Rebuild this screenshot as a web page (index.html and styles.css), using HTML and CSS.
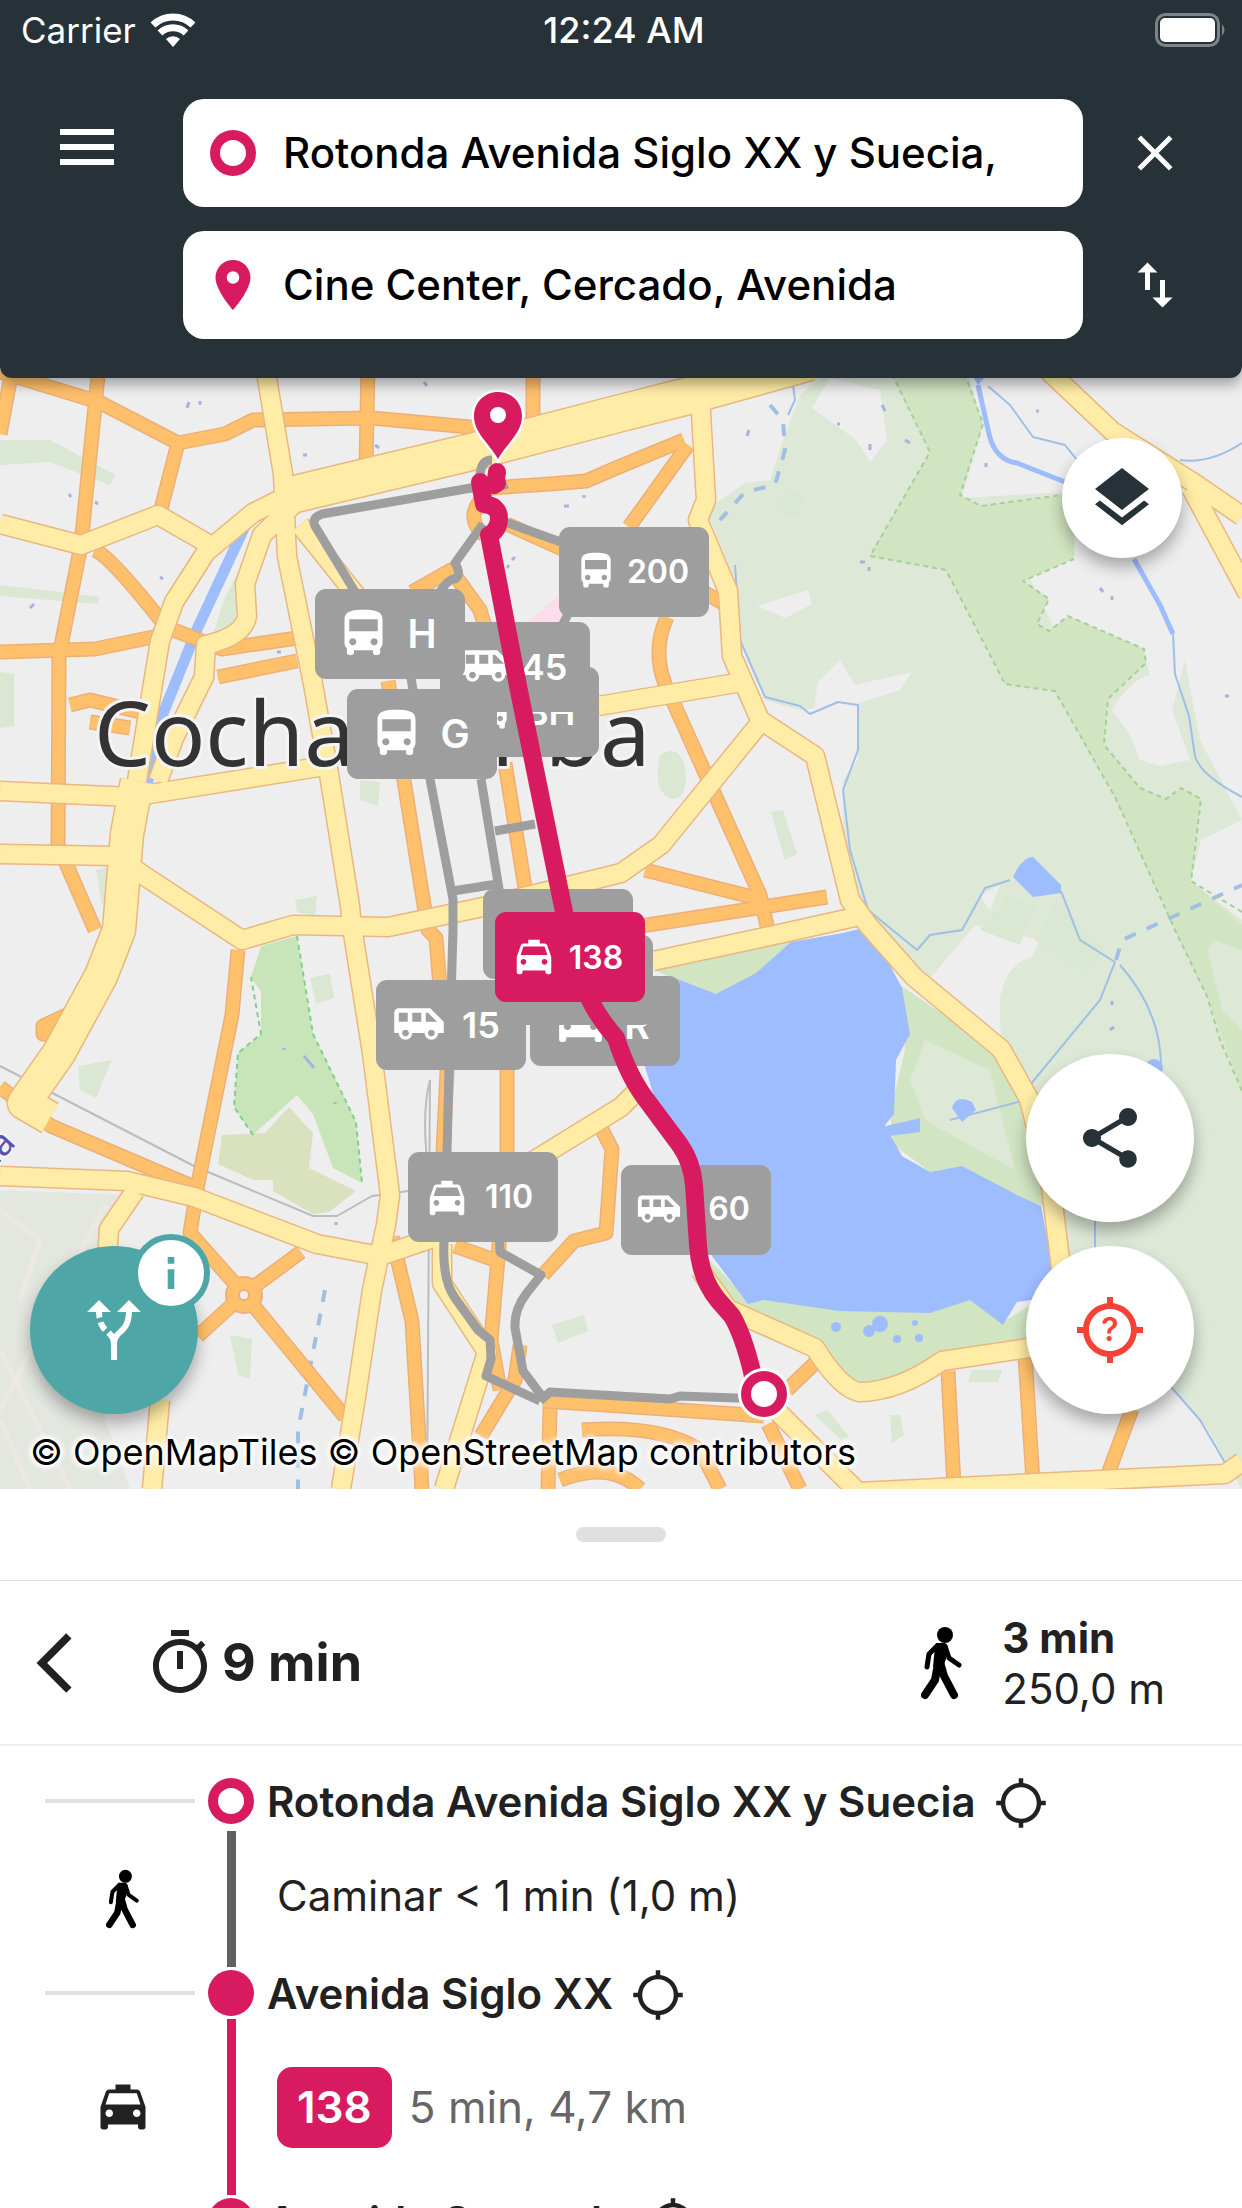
FILE: index.html
```html
<!DOCTYPE html>
<html lang="es">
<head>
    <meta charset="UTF-8">
    <meta name="viewport" content="width=device-width, initial-scale=1.0">
    <title>Rutas</title>
    <link rel="stylesheet" href="styles.css">
</head>
<body>
    <!-- ICONS -->
    <svg class="sprite" aria-hidden="true">
        <symbol id="i-menu" viewBox="0 0 24 24"><path d="M3 18h18v-2H3v2zm0-5h18v-2H3v2zm0-7v2h18V6H3z"/></symbol>
        <symbol id="i-close" viewBox="0 0 24 24"><path d="M19 6.41L17.59 5 12 10.59 6.41 5 5 6.41 10.59 12 5 17.59 6.41 19 12 13.41 17.59 19 19 17.59 13.41 12z"/></symbol>
        <symbol id="i-swap" viewBox="0 0 24 24"><path d="M16 17.01V10h-2v7.01h-3L15 21l4-3.99h-3zM9 3L5 6.99h3V14h2V6.99h3L9 3z"/></symbol>
        <symbol id="i-pin" viewBox="0 0 24 24"><path d="M12 2C8.13 2 5 5.13 5 9c0 5.25 7 13 7 13s7-7.75 7-13c0-3.87-3.13-7-7-7zm0 9.5a2.5 2.5 0 010-5 2.5 2.5 0 010 5z"/></symbol>
        <symbol id="i-layers" viewBox="0 0 24 24"><path d="M12 16l7.36-5.73L21 9l-9-7-9 7 1.63 1.27M12 18.54l-7.38-5.73L3 14.07l9 7 9-7-1.63-1.27L12 18.54z"/></symbol>
        <symbol id="i-share" viewBox="0 0 24 24"><path d="M18 16.08c-.76 0-1.44.3-1.96.77L8.91 12.7c.05-.23.09-.46.09-.7s-.04-.47-.09-.7l7.05-4.11c.54.5 1.25.81 2.04.81 1.66 0 3-1.34 3-3s-1.34-3-3-3-3 1.34-3 3c0 .24.04.47.09.7L8.04 9.81C7.5 9.31 6.79 9 6 9c-1.66 0-3 1.34-3 3s1.34 3 3 3c.79 0 1.5-.31 2.04-.81l7.12 4.16c-.05.21-.08.43-.08.65 0 1.61 1.31 2.92 2.92 2.92s2.92-1.31 2.92-2.92-1.31-2.92-2.92-2.92z"/></symbol>
        <symbol id="i-target" viewBox="0 0 24 24"><path d="M20.94 11c-.46-4.17-3.77-7.48-7.94-7.94V1h-2v2.06C6.83 3.52 3.52 6.83 3.06 11H1v2h2.06c.46 4.17 3.77 7.48 7.94 7.94V23h2v-2.06c4.17-.46 7.48-3.77 7.94-7.94H23v-2h-2.06zM12 19c-3.87 0-7-3.13-7-7s3.13-7 7-7 7 3.13 7 7-3.13 7-7 7z"/></symbol>
        <symbol id="i-route" viewBox="0 0 24 24"><path d="M9.78 11.16l-1.42 1.42c-.68-.69-1.34-1.58-1.79-2.94l1.94-.49c.32.89.77 1.5 1.27 2.01zM11 6L7 2 3 6h3.02c.02.81.08 1.54.19 2.17l1.94-.49C8.08 7.2 8.03 6.63 8.02 6H11zm10 0l-4-4-4 4h2.99c-.1 3.68-1.28 4.75-2.54 5.88-.5.44-1.01.92-1.45 1.55-.34-.49-.73-.88-1.13-1.24L9.46 13.6c.93.85 1.54 1.54 1.54 3.4v5h2v-5c0-2.02.71-2.66 1.79-3.63 1.38-1.24 3.08-2.78 3.2-7.37H21z"/></symbol>
        <symbol id="i-back" viewBox="0 0 24 24"><path d="M17.51 3.87L15.73 2.1 5.84 12l9.9 9.9 1.77-1.77L9.38 12l8.13-8.13z"/></symbol>
        <symbol id="i-timer" viewBox="0 0 24 24"><path d="M15 1H9v2h6V1zm-4 13h2V8h-2v6zm8.03-6.61l1.42-1.42c-.43-.51-.9-.99-1.41-1.41l-1.42 1.42A8.962 8.962 0 0012 4c-4.97 0-9 4.03-9 9s4.02 9 9 9a8.994 8.994 0 007.03-14.61zM12 20c-3.87 0-7-3.13-7-7s3.13-7 7-7 7 3.13 7 7-3.13 7-7 7z"/></symbol>
        <symbol id="i-bus" viewBox="0 0 24 24"><path d="M4 16c0 .88.39 1.67 1 2.22V20c0 .55.45 1 1 1h1c.55 0 1-.45 1-1v-1h8v1c0 .55.45 1 1 1h1c.55 0 1-.45 1-1v-1.78c.61-.55 1-1.34 1-2.22V6c0-3.5-3.58-4-8-4s-8 .5-8 4v10zm3.5 1c-.83 0-1.5-.67-1.5-1.5S6.67 14 7.5 14s1.5.67 1.5 1.5S8.33 17 7.5 17zm9 0c-.83 0-1.5-.67-1.5-1.5s.67-1.5 1.5-1.5 1.5.67 1.5 1.5-.67 1.5-1.5 1.5zm1.5-6H6V6h12v5z"/></symbol>
        <symbol id="i-taxi" viewBox="0 0 24 24"><path d="M18.92 6.01C18.72 5.42 18.16 5 17.5 5H15V3H9v2H6.5c-.66 0-1.21.42-1.42 1.01L3 12v8c0 .55.45 1 1 1h1c.55 0 1-.45 1-1v-1h12v1c0 .55.45 1 1 1h1c.55 0 1-.45 1-1v-8l-2.08-5.99zM6.5 16c-.83 0-1.5-.67-1.5-1.5S5.67 13 6.5 13s1.5.67 1.5 1.5S7.33 16 6.5 16zm11 0c-.83 0-1.5-.67-1.5-1.5s.67-1.5 1.5-1.5 1.5.67 1.5 1.5-.67 1.5-1.5 1.5zM5 11l1.5-4.5h11L19 11H5z"/></symbol>
        <symbol id="i-van" viewBox="0 0 24 24"><path d="M17 5H3c-1.1 0-2 .89-2 2v9h2c0 1.65 1.34 3 3 3s3-1.35 3-3h5.5c0 1.65 1.34 3 3 3s3-1.35 3-3H23v-5l-6-6zM3 11V7h4v4H3zm3 6.5c-.83 0-1.5-.67-1.5-1.5s.67-1.5 1.5-1.5 1.5.67 1.5 1.5-.67 1.5-1.5 1.5zm7-6.5H9V7h4v4zm4.5 6.5c-.83 0-1.5-.67-1.5-1.5s.67-1.5 1.5-1.5 1.5.67 1.5 1.5-.67 1.5-1.5 1.5zM15 11V7h1l4 4h-5z"/></symbol>
        <symbol id="i-walk" viewBox="0 0 42 74">
            <circle cx="24" cy="9" r="8"/>
            <path d="M15 17h9l3 4-2 12-3 8h-10l2-20z"/>
            <g fill="none" stroke="currentColor" stroke-linecap="round" stroke-linejoin="round">
                <path stroke-width="5" d="M16 20l-8 8-2 13M24 20l4 12 10 7"/>
                <path stroke-width="8" d="M17 38l-3 16-10 15M19 36l4 14 10 19"/>
            </g>
        </symbol>
    </svg>

    <div class="app">
        <!-- START HEADER -->
        <header class="header">
            <div class="statusbar">
                <div class="carrier">
                    <span>Carrier</span>
                    <svg class="wifi" viewBox="0 0 46 34">
                        <path d="M23 34l-7-8a10 10 0 0114 0z" fill="#fff"/>
                        <path d="M10 20a19 19 0 0126 0M3 12a29 29 0 0140 0" fill="none" stroke="#fff" stroke-width="7"/>
                    </svg>
                </div>
                <span class="clock">12:24 AM</span>
                <svg class="battery" viewBox="0 0 72 34">
                    <rect x="1.5" y="1.5" width="62" height="31" rx="9" fill="none" stroke="#7d8488" stroke-width="3"/>
                    <rect x="5" y="5" width="55" height="24" rx="5" fill="#fff"/>
                    <path d="M67 11q5 6 0 12z" fill="#7d8488"/>
                </svg>
            </div>
            <form class="search">
                <button type="button" class="icon-btn menu-btn" aria-label="Menú"><svg class="icon-lg"><use href="#i-menu"/></svg></button>
                <label class="field">
                    <span class="field-icon"><span class="ring"></span></span>
                    <input type="text" aria-label="Origen" value="Rotonda Avenida Siglo XX y Suecia,">
                </label>
                <button type="button" class="icon-btn side-btn" aria-label="Cerrar"><svg class="icon-md"><use href="#i-close"/></svg></button>
                <label class="field field-to">
                    <span class="field-icon"><svg class="icon-md"><use href="#i-pin"/></svg></span>
                    <input type="text" aria-label="Destino" value="Cine Center, Cercado, Avenida">
                </label>
                <button type="button" class="icon-btn side-btn" aria-label="Intercambiar"><svg class="icon-md"><use href="#i-swap"/></svg></button>
            </form>
        </header>
        <!-- END HEADER -->

        <!-- START MAP -->
        <main class="map">
            <svg class="map-canvas" viewBox="0 366 1242 1123" preserveAspectRatio="xMidYMid slice">
                <defs>
                    <g id="streets">
                        <path d="M0 372L99 402 178 443 225 434 253 420 372 418 480 428"/>
                        <path d="M99 366L81 545 59 656 58 845 95 930"/>
                        <path d="M178 443L160 513M12 370L0 434"/>
                        <path d="M95 550Q112 558 166 627L222 649 297 638"/>
                        <path d="M0 652L95 649 158 636M218 677L297 661"/>
                        <path d="M368 366L366 466M533 366V427"/>
                        <path d="M491 488L550 484 586 481 621 466 684 440M688 445L629 527"/>
                        <path d="M388 681L428 930 436 938 447 1072 443 1152"/>
                        <path d="M505 763L525 888M507 1050V1152L491 1340 500 1390"/>
                        <path d="M412 592L451 570 480 610 486 630"/>
                        <path d="M480 500Q466 520 484 535M507 524L562 549M700 590L735 610"/>
                        <path d="M667 617Q652 650 665 684L760 895 768 930"/>
                        <path d="M645 870L760 899M641 926L827 897"/>
                        <path d="M238 950L232 1015 198 1183 190 1233 244 1294 345 1417"/>
                        <path d="M301 1252L244 1294 198 1336"/>
                        <path d="M0 1087L51 1126 194 1187"/>
                        <path d="M75 1011L43 1026 43 1034 62 1036"/>
                        <path d="M70 705L90 700 140 712M90 722L130 728"/>
                        <path d="M392 1237L412 1321 422 1489"/>
                        <path d="M520 1345L515 1380 481 1436"/>
                        <path d="M602 1130L612 1149 606 1233 574 1241 543 1275"/>
                        <path d="M543 1401L621 1406 764 1416M550 1409L548 1489"/>
                        <path d="M582 1430Q660 1424 700 1450L720 1489M560 1480Q610 1460 640 1489"/>
                        <path d="M768 1424L800 1489M815 1363L787 1390"/>
                        <path d="M948 1371L954 1486M1025 1355L1033 1482M1132 1409L1108 1474"/>
                        <path d="M455 1246L500 1262"/>
                    </g>
                    <g id="roads">
                        <path d="M265 366L283 474 287 556 313 684 329 774 350 906 352 927 372 1053 390 1195 386 1225 372 1290 356 1397 341 1489"/>
                        <path d="M0 524L81 545 158 515 210 545"/>
                        <path d="M293 493L253 513 206 552 174 602 160 641 137 781"/>
                        <path d="M293 505L262 535 245 584 247 616Q244 636 206 645L204 677 174 738 158 781"/>
                        <path d="M0 791L131 797 325 766"/>
                        <path d="M0 854L115 856 146 877 242 940 293 925 388 927 483 907 621 873 661 845 760 723"/>
                        <path d="M300 525L360 600"/>
                        <path d="M700 396L706 500 698 520 728 591 732 656 760 720 815 756 850 900 868 925 914 977 1001 1049 1029 1099 1051 1187 1065 1300 1080 1350 1029 1348 942 1361Q898 1392 859 1392 840 1388 815 1348L728 1309 700 1270"/>
                        <path d="M598 706L748 681M653 961L779 934 855 917"/>
                        <path d="M779 1413L855 1489M859 1492L1057 1482 1225 1474 1242 1462"/>
                        <path d="M1037 360L1112 431 1191 481 1242 516M1191 488L1248 594"/>
                        <path d="M0 1176L127 1181 194 1197 317 1244 380 1256 436 1237 530 1163 621 1107 641 1087"/>
                        <path d="M442 1244V1283L487 1352 444 1489"/>
                        <path d="M135 1191L109 1229 107 1260M160 1400L152 1489"/>
                    </g>
                    <g id="avenues">
                        <path d="M137 781L127 834 119 930 101 976 59 1053 24 1103 50 1118"/>
                    </g>
                    <g id="trunk">
                        <path d="M291 495L471 452 621 413 688 396 810 362"/>
                    </g>
                </defs>

                <rect class="land" y="366" width="1242" height="1123"/>

                <!-- parks and water -->
                <path class="park" d="M706 510L745 483 770 480 783 440 800 395 820 378 965 366 983 422 962 498 1065 492 1075 555 1030 578 1055 630 1145 655 1155 700 1170 720 1185 660 1200 740 1242 820V1489L1207 1428 1171 1386 1080 1350 1060 1200 1000 1049 914 977 870 920 843 860 843 780 858 760 858 703 800 710 765 700 740 640 735 580z"/>
                <path class="land" d="M812 408L830 378 880 390 887 440 870 462 856 440zM757 606L808 590 812 604 785 618zM813 715L818 682 840 660 855 685 912 672 900 690 860 703zM1112 710Q1130 680 1150 675L1165 690 1190 760 1160 766 1140 760 1130 735zM1201 840L1242 820V920L1191 881zM931 977L975 925 1040 940 1010 1000 1000 1050zM980 896L1000 885 990 910z"/>
                <path class="forest" d="M888 366L930 452 870 556 946 570 1005 684 1055 691 1116 799 1175 930 1207 996 1242 1091V925L1191 881 1201 799 1181 788 1166 799 1140 788 1104 745 1108 699 1146 663 1144 649 1068 616 1049 631 1037 624 1049 599 1023 581 1074 559 1076 493 981 506 960 495 983 424 962 366z"/>
                <path class="park" d="M1207 950L1214 940 1242 950V1030L1222 1010z"/>
                <path class="grass" d="M775 500l12-12 16 8-4 22-24-6zM980 930L1010 895 1035 905 1020 945zM1035 940L1055 900 1105 950 1085 975zM0 440L50 440 115 475 110 485 50 462 0 465zM0 585L100 597 97 604 0 596zM0 672L14 674V726L0 728zM360 780L380 782 378 806 360 800zM295 900l22-4-2 20-18-4zM660 755q22-14 26 20 0 24-14 24-20-6-12-44zM771 812l12-2 14 44-12 6zM78 1066L112 1060 96 1098 80 1090zM552 1325l32-10 4 16-30 12zM230 1335l22 4-2 40-12-4zM972 1370h30l-4 12h-30zM815 1415l12-5 22 26-8 4zM890 1415h10l4 20-12 8zM310 978l20-4 4 24-18 6zM96 870l20-4-14 40zM224 600l18-36-8 60-26 26z"/>
                <path class="pink" d="M528 622L565 590 570 625z"/>
                <path class="garden" d="M261 946L297 936 313 1034 356 1122 362 1183 333 1168 313 1114 297 1095 253 1135 234 1107 238 1053 261 1034 261 992 251 977z"/>
                <path class="school" d="M289 1107L313 1133 309 1168 356 1191 329 1212 313 1214 273 1191V1180L253 1180 218 1164 222 1135 265 1133z"/>
                <path class="airport" d="M0 1190L125 1195 105 1240V1420L130 1489H0z"/>
                <path class="runway" d="M0 1410L105 1205M0 1350L70 1489M0 1210L40 1240 20 1300M30 1489L0 1420"/>
                <path class="forest" d="M655 970L716 1000 765 975 800 935 740 950zM900 985L1010 1060 1045 1206 1020 1200 962 1166 930 1172 894 1145 890 1114 905 1050zM700 1250L748 1300 764 1298 930 1312 970 1298 1003 1322 1029 1306V1346L942 1361 898 1390 859 1390 815 1348 728 1309z"/>
                <path class="park" d="M925 1040L990 1070 1015 1170 960 1140 925 1120 910 1080zM1000 1000q5-40 40-45l30 20 22 60-40 40-40 0q-14-30-12-75z"/>
                <path class="water" d="M653 977L672 977 716 994 756 973 791 942 843 933 859 929 882 950 902 988 910 1034 896 1060 894 1114 885 1125 902 1156 930 1172 962 1166 1017 1195 1041 1206 1053 1267 1053 1297 1017 1302 1003 1325 970 1300 930 1313 839 1311 764 1300 748 1304 712 1256 690 1150 655 1100 640 1050z"/>
                <path class="water" d="M1013 877Q1022 857 1033 857L1061 885V893L1033 897zM967 366H995L978 385zM952 1108q4-14 20-6l4 8-14 12zM886 1126l34-8v14l-30 4z"/>
                <g class="water">
                    <circle cx="880" cy="1324" r="8"/><circle cx="869" cy="1331" r="6"/><circle cx="836" cy="1327" r="5"/><circle cx="897" cy="1339" r="4"/><circle cx="919" cy="1338" r="4"/><circle cx="915" cy="1323" r="3"/><circle cx="1154" cy="1068" r="9"/>
                </g>
                <path class="river" d="M246 524L198 627 162 716 147 785"/>
                <path class="river-md" d="M978 385L989 434Q995 460 1017 463L1065 482M1134 559L1160 605 1173 634"/>
                <path class="stream" d="M988 386L1010 405 1033 437 1065 445 1085 470M1173 634L1175 674 1189 716 1195 756Q1200 775 1242 797M1180 460Q1210 464 1242 443M735 565L740 640 765 697 800 706 810 714 838 702 858 705V750L843 790 850 850 868 910 917 950 930 935 962 930 985 888 1010 880M1061 891L1080 940 1115 962 1100 1000 1030 1085M1120 965Q1160 1010 1161 1064M1029 1099L950 1120M1095 1200V1300L1200 1420 1227 1466M793 385L795 400 788 415"/>
                <path class="stream-dash" d="M770 405L783 420 785 450 775 485 745 492 720 520M1116 960L1122 940 1242 885M325 1290L298 1430V1489"/>
                <path class="fence" d="M888 366L930 452 870 556 946 570 1005 684 1055 691 1116 799 1175 930 1207 996 1220 1040 1242 1091M1242 912L1191 881 1201 799 1181 788 1166 799 1140 788 1104 745 1108 699 1146 663 1144 649 1068 616 1049 631 1037 624 1049 599 1023 581 1074 559M1076 493L981 506 960 495 983 424 962 366"/>
                <path class="fence green" d="M297 936L313 1034 356 1122 362 1183M253 1135L234 1107 238 1053 261 1034 251 977"/>
                <path class="rail" d="M0 1066L194 1166 313 1216H337L372 1196 408 1191M430 1080L427 1489M430 1080Q422 1110 427 1160"/>

                <!-- roads: casing first, fill on top -->
                <use href="#streets" class="street-case"/>
                <circle class="roundabout-case" cx="244" cy="1295" r="19"/>
                <use href="#streets" class="street"/>
                <circle class="roundabout" cx="244" cy="1295" r="17"/>
                <circle class="roundabout-hub" cx="244" cy="1295" r="5"/>
                <use href="#roads" class="road-case"/>
                <use href="#avenues" class="avenue-case"/>
                <use href="#trunk" class="trunk-case"/>
                <use href="#roads" class="road"/>
                <use href="#avenues" class="avenue"/>
                <use href="#trunk" class="trunk"/>
                <path class="specks" d="M187 408l2-6M200 405v-4M424 382l3 4M375 445l4 3M303 455h4M69 494l2 3M95 502l3 2M160 577l3 2M564 506h5M584 495v3M512 560l3-3M509 565l-2 3M837 424h3M749 430l-2 6M870 450v-6M905 440l5 3M882 405l3 6M1036 411h3M1100 588l3 4M1112 596v4M986 463v4M860 562h5M869 571v-4M30 608l4-4M277 652h4M1225 696h4M1112 1005v-4M1110 1030l4-3M284 1048v2M304 1056l10 12M335 1102v2M336 1225v-3"/>

                <text class="city" x="94" y="766">Cochabamba</text>
                <text class="district" transform="translate(-12 1175) rotate(-47)">na</text>

                <!-- alternative routes -->
                <g class="alt">
                    <path d="M507 484Q495 490 471 488L322 514Q311 518 315 526L360 600"/>
                    <path d="M480 478Q480 460 492 460M505 522L558 541 600 560M483 524L455 563Q462 575 455 579 447 578 435 600M570 610L560 630"/>
                    <path d="M400 620L415 700 430 779 453 899V930L449 1068 447 1152 444 1242Q442 1280 455 1298L478 1330 490 1340 491 1359 486 1376 540 1401"/>
                    <path d="M481 779L500 895M495 831L535 824M453 891L497 884"/>
                    <path d="M499 1230L500 1252 541 1275 526 1294Q514 1310 515 1328L523 1371 544 1399M540 1401L550 1392 670 1399 680 1396 764 1399"/>
                </g>

                <!-- line badges -->
                <g class="badge">
                    <rect x="559" y="527" width="150" height="90" rx="11"/>
                    <use href="#i-bus" x="574" y="549" width="44" height="44"/>
                    <text x="658" y="583">200</text>
                </g>
                <g class="badge">
                    <rect x="449" y="667" width="150" height="90" rx="11"/>
                    <use href="#i-bus" x="470" y="690" width="44" height="44"/>
                    <text class="mid" x="550" y="725">BH</text>
                </g>
                <g class="badge">
                    <rect x="440" y="622" width="150" height="90" rx="11"/>
                    <use href="#i-van" x="459" y="639" width="54" height="54"/>
                    <text class="mid" x="544" y="680">45</text>
                </g>
                <g class="badge">
                    <rect x="315" y="589" width="150" height="90" rx="11"/>
                    <use href="#i-bus" x="335" y="605" width="57" height="57"/>
                    <text class="big" x="422" y="648">H</text>
                </g>
                <g class="badge">
                    <rect x="347" y="689" width="150" height="90" rx="11"/>
                    <use href="#i-bus" x="368" y="705" width="57" height="57"/>
                    <text class="big" x="455" y="748">G</text>
                </g>
                <g class="badge">
                    <rect x="530" y="976" width="150" height="90" rx="11"/>
                    <use href="#i-taxi" x="552" y="992" width="57" height="57"/>
                    <text class="big" x="637" y="1039">R</text>
                    <rect x="503" y="935" width="150" height="90" rx="11"/>
                    <rect x="483" y="889" width="150" height="90" rx="11"/>
                </g>
                <g class="badge">
                    <rect x="376" y="980" width="150" height="90" rx="11"/>
                    <use href="#i-van" x="392" y="997" width="54" height="54"/>
                    <text class="mid" x="481" y="1038">15</text>
                </g>
                <g class="badge">
                    <rect x="408" y="1152" width="150" height="90" rx="11"/>
                    <use href="#i-taxi" x="424" y="1175" width="46" height="46"/>
                    <text x="509" y="1208">110</text>
                </g>
                <g class="badge">
                    <rect x="621" y="1165" width="150" height="90" rx="11"/>
                    <use href="#i-van" x="636" y="1186" width="46" height="46"/>
                    <text x="729" y="1220">60</text>
                </g>

                <!-- selected route -->
                <path class="route" d="M497 472L496 480M497 483L494 485M480 482L484 504Q499 506 499 518 499 530 489 535L519 691 564 912 590 1000Q600 1020 616 1038 628 1075 645 1098L680 1145Q692 1162 694 1185L698 1245Q700 1278 718 1300L732 1316Q746 1340 756 1390"/>
                <g class="badge selected">
                    <rect x="495" y="912" width="150" height="90" rx="11"/>
                    <use href="#i-taxi" x="511" y="934" width="46" height="46"/>
                    <text x="596" y="969">138</text>
                </g>
                <path class="pin" d="M498 392c-13 0-24 10-24 24 0 17 15 27 24 43 9-16 24-26 24-43 0-14-11-24-24-24z"/>
                <circle cx="498" cy="415" r="8" fill="#fff"/>
                <circle cx="764" cy="1394" r="26" fill="#fff"/>
                <circle class="start" cx="764" cy="1394" r="18"/>
            </svg>

            <div class="map-controls">
                <button type="button" class="fab fab-sm" aria-label="Capas"><svg class="icon-lg"><use href="#i-layers"/></svg></button>
                <div class="fab-row">
                    <button type="button" class="fab" aria-label="Compartir"><svg class="icon-lg"><use href="#i-share"/></svg></button>
                </div>
                <div class="fab-row">
                    <button type="button" class="fab fab-teal" aria-label="Elegir ruta">
                        <svg class="icon-lg"><use href="#i-route"/></svg>
                        <span class="info"><svg viewBox="0 0 24 24"><path d="M10.8 6.2h2.4v2.4h-2.4zM10.8 10.6h2.4v7.2h-2.4z"/></svg></span>
                    </button>
                    <button type="button" class="fab fab-red" aria-label="Mi ubicación">
                        <svg class="icon-lg"><use href="#i-target"/></svg>
                        <span class="question">?</span>
                    </button>
                </div>
                <p class="attribution">© OpenMapTiles © OpenStreetMap contributors</p>
            </div>
        </main>
        <!-- END MAP -->

        <!-- START SHEET -->
        <section class="sheet">
            <div class="grip"><span></span></div>
            <div class="summary">
                <button type="button" class="icon-btn back-btn" aria-label="Atrás"><svg class="icon-lg"><use href="#i-back"/></svg></button>
                <div class="total">
                    <svg class="icon-lg"><use href="#i-timer"/></svg>
                    <strong>9 min</strong>
                </div>
                <div class="walking">
                    <svg class="walker-lg"><use href="#i-walk"/></svg>
                    <div class="walking-text">
                        <strong>3 min</strong>
                        <span>250,0 m</span>
                    </div>
                </div>
            </div>

            <ol class="steps">
                <li class="stop">
                    <span class="tick"></span>
                    <span class="dot"><span class="ring"></span></span>
                    <strong>Rotonda Avenida Siglo XX y Suecia</strong>
                    <button type="button" class="icon-btn" aria-label="Ver en el mapa"><svg class="icon-sm"><use href="#i-target"/></svg></button>
                </li>
                <li class="leg">
                    <span class="mode"><svg class="walker"><use href="#i-walk"/></svg></span>
                    <span class="bar"></span>
                    <span class="leg-text">Caminar &lt; 1 min (1,0 m)</span>
                </li>
                <li class="stop">
                    <span class="tick"></span>
                    <span class="dot"><span class="disc"></span></span>
                    <strong>Avenida Siglo XX</strong>
                    <button type="button" class="icon-btn" aria-label="Ver en el mapa"><svg class="icon-sm"><use href="#i-target"/></svg></button>
                </li>
                <li class="leg leg-ride">
                    <span class="mode"><svg class="icon-md"><use href="#i-taxi"/></svg></span>
                    <span class="bar"></span>
                    <span class="leg-text"><span class="line">138</span>5 min, 4,7 km</span>
                </li>
                <li class="stop">
                    <span></span>
                    <span class="dot"><span class="disc"></span></span>
                    <strong>Avenida Oquendo</strong>
                    <button type="button" class="icon-btn" aria-label="Ver en el mapa"><svg class="icon-sm"><use href="#i-target"/></svg></button>
                </li>
            </ol>
        </section>
        <!-- END SHEET -->
    </div>
</body>
</html>
```
FILE: styles.css
```css
* {
    box-sizing: border-box;
}

body {
    margin: 0;
    font-family: Inter, "Liberation Sans", sans-serif;
    font-size: 42px;
    color: #212121;
    background-color: #fff;
}

button {
    padding: 0;
    border: none;
    background: none;
    font: inherit;
    color: inherit;
    cursor: pointer;
}

svg {
    display: block;
    fill: currentColor;
}

strong {
    font-weight: 600;
}

.sprite {
    position: absolute;
    width: 0;
    height: 0;
}

.app {
    height: 100vh;
    overflow: hidden;
}

.icon-btn {
    display: flex;
    align-items: center;
    justify-content: center;
}

.icon-sm {
    width: 54px;
    height: 54px;
}

.icon-md {
    width: 60px;
    height: 60px;
}

.icon-lg {
    width: 72px;
    height: 72px;
}

/* HEADER */
.header {
    position: relative;
    z-index: 1;
    padding-bottom: 39px;
    border-radius: 0 0 12px 12px;
    background-color: #263238;
    color: #fff;
    box-shadow: 0 6px 14px rgba(0, 0, 0, 0.35);
}

.statusbar {
    display: grid;
    grid-template-columns: 1fr auto 1fr;
    align-items: center;
    height: 60px;
    padding: 0 15px 0 21px;
    font-size: 35px;
}

.carrier {
    display: flex;
    align-items: center;
    gap: 14px;
}

.wifi {
    width: 46px;
    height: 34px;
}

.clock {
    font-size: 36px;
    font-weight: 500;
}

.battery {
    justify-self: end;
    width: 72px;
    height: 34px;
}

.search {
    display: grid;
    grid-template-columns: 183px 1fr 159px;
    row-gap: 24px;
    margin: 0;
    padding-top: 39px;
}

.menu-btn {
    padding: 0 9px 12px 0;
}

.side-btn {
    padding-right: 15px;
}

.field {
    display: flex;
    align-items: center;
    height: 108px;
    border-radius: 21px;
    background-color: #fff;
}

.field-to {
    grid-column: 2;
}

.field-icon {
    display: flex;
    justify-content: center;
    width: 100px;
    color: #d81b60;
}

.field input {
    flex: 1;
    min-width: 0;
    padding: 0 0 2px;
    border: none;
    outline: none;
    background: none;
    font: inherit;
    font-weight: 500;
    color: #000;
}

.ring {
    width: 46px;
    height: 46px;
    border: 10px solid #d81b60;
    border-radius: 50%;
    background-color: #fff;
}

/* MAP */
.map {
    position: relative;
    width: 100%;
    aspect-ratio: 1242 / 1123;
    margin-top: -12px;
}

.map-canvas {
    width: 100%;
    height: 100%;
}

.land { fill: #eeeeee; }
.park { fill: #dde8d7; }
.grass { fill: #d9e7d3; }
.forest { fill: #d1e5c2; }
.garden { fill: #c7e5b8; }
.school { fill: #dae1bf; }
.airport { fill: #e4e7e0; }
.pink { fill: #fddcec; }
.water { fill: #9ebdff; }

.runway,
.river,
.river-md,
.stream,
.stream-dash,
.fence,
.rail,
.specks,
.alt,
.route {
    fill: none;
    stroke-linejoin: round;
}

.runway { stroke: #ece9e2; stroke-width: 5; }
.river { stroke: #9ebdff; stroke-width: 11; }
.river-md { stroke: #9ebdff; stroke-width: 5; }
.stream { stroke: #9fbfe6; stroke-width: 2; }
.stream-dash { stroke: #9fc0e4; stroke-width: 4; stroke-dasharray: 12 12; }
.fence { stroke: #a5d096; stroke-width: 2; stroke-dasharray: 5 4; }
.fence.green { stroke: #7fd08a; }
.rail { stroke: #b9bdbd; stroke-width: 2; }
.specks { stroke: #a9b2dc; stroke-width: 3; }

.street-case,
.street,
.road-case,
.road,
.avenue-case,
.avenue,
.trunk-case,
.trunk {
    fill: none;
    stroke-linejoin: round;
}

.street-case { stroke: #ecb077; stroke-width: 15; }
.street { stroke: #ffc06b; stroke-width: 12; }
.road-case { stroke: #eab780; stroke-width: 21; }
.road { stroke: #ffeca6; stroke-width: 18; }
.avenue-case { stroke: #eab780; stroke-width: 35; }
.avenue { stroke: #ffeca6; stroke-width: 32; }
.trunk-case { stroke: #eab780; stroke-width: 39; }
.trunk { stroke: #ffeca6; stroke-width: 36; }

.roundabout-case { fill: #ecb077; }
.roundabout { fill: #ffc06b; }
.roundabout-hub { fill: #eee; stroke: #ecb077; stroke-width: 2; }

.city {
    font-family: "Noto Sans", "Open Sans", sans-serif;
    font-size: 90px;
    fill: #333;
    stroke: #f4f4f4;
    stroke-width: 6;
    stroke-linejoin: round;
    paint-order: stroke;
}

.district {
    font-family: "Noto Sans", "Open Sans", sans-serif;
    font-size: 36px;
    fill: #5b4fb0;
    stroke: #f4f4f4;
    stroke-width: 4;
    paint-order: stroke;
}

.alt {
    stroke: #9e9e9e;
    stroke-width: 9;
}

.badge rect {
    fill: #9e9e9e;
}

.badge {
    fill: #fff;
}

.badge text {
    font-size: 32px;
    font-weight: 600;
    text-anchor: middle;
}

.badge .mid {
    font-size: 36px;
}

.badge .big {
    font-size: 39px;
}

.selected rect {
    fill: #d81b60;
}

.route {
    stroke: #d81b60;
    stroke-width: 18;
    stroke-linecap: round;
}

.pin {
    fill: #d81b60;
    stroke: #fff;
    stroke-width: 5;
    paint-order: stroke;
}

.start {
    fill: #fff;
    stroke: #d81b60;
    stroke-width: 10;
}

.map-controls {
    position: absolute;
    inset: 12px 0 0;
    display: flex;
    flex-direction: column;
    gap: 24px;
    padding: 60px 48px 0 30px;
}

.fab-row {
    display: flex;
    justify-content: flex-end;
}

.fab {
    position: relative;
    display: flex;
    align-items: center;
    justify-content: center;
    width: 168px;
    height: 168px;
    border-radius: 50%;
    background-color: #fff;
    color: #263238;
    box-shadow: 0 9px 16px rgba(0, 0, 0, 0.3);
}

.fab-sm {
    align-self: flex-end;
    width: 120px;
    height: 120px;
    margin: 0 12px auto 0;
}

.fab-teal {
    margin-right: auto;
    background-color: #4fa6a6;
    color: #fff;
}

.fab-red {
    color: #f44336;
}

.info {
    position: absolute;
    top: -12px;
    right: -12px;
    width: 78px;
    height: 78px;
    border: 6px solid #4fa6a6;
    border-radius: 50%;
    background-color: #fff;
    color: #4fa6a6;
}

.question {
    position: absolute;
    inset: 0;
    font-size: 32px;
    font-weight: 600;
    line-height: 168px;
}

.attribution {
    margin: 0;
    padding-bottom: 23px;
    font-size: 36px;
    line-height: 28px;
    color: #000;
    text-shadow: 0 0 4px #fff, 0 0 4px #fff, 0 0 6px #fff, 0 0 6px #fff, 0 0 8px #fff, 0 0 8px #fff;
}

/* SHEET */
.grip {
    display: flex;
    align-items: center;
    justify-content: center;
    height: 92px;
    border-bottom: 1px solid #dedede;
}

.grip span {
    width: 90px;
    height: 15px;
    border-radius: 8px;
    background-color: #e0e0e0;
}

.summary {
    display: flex;
    align-items: center;
    height: 165px;
    padding: 0 77px 0 19px;
    border-bottom: 2px solid #eee;
}

.total {
    display: flex;
    align-items: center;
    gap: 6px;
    margin-left: 53px;
    margin-right: auto;
    font-size: 52px;
}

.total strong,
.walking-text strong {
    font-weight: 700;
}

.walking {
    display: flex;
    align-items: center;
    gap: 39px;
}

.walking-text {
    display: flex;
    flex-direction: column;
    line-height: 51px;
}

.walker-lg {
    width: 42px;
    height: 74px;
    color: #000;
}

.walker {
    width: 34px;
    height: 60px;
    color: #000;
}

.steps {
    margin: 0;
    padding: 29px 0 0 45px;
    list-style: none;
}

.stop {
    display: grid;
    grid-template: 52px / 150px 72px auto auto;
    justify-content: start;
    align-items: center;
}

.stop .icon-btn {
    margin-left: 18px;
    padding-top: 4px;
}

.tick {
    height: 4px;
    background-color: #e0e0e0;
}

.dot {
    display: flex;
    justify-content: center;
}

.disc {
    width: 46px;
    height: 46px;
    border-radius: 50%;
    background-color: #d81b60;
}

.leg {
    display: grid;
    grid-template-columns: 156px 60px auto;
    justify-content: start;
    height: 140px;
    padding-top: 4px;
}

.leg-ride {
    height: 176px;
    padding-top: 0;
}

.mode {
    display: flex;
    align-items: center;
    justify-content: center;
    padding-right: 36px;
    padding-left: 0;
}

.mode svg {
    margin-left: 36px;
}

.bar {
    width: 9px;
    justify-self: center;
    background-color: #616161;
}

.leg-ride .bar {
    background-color: #d81b60;
}

.leg-text {
    display: flex;
    align-items: center;
    gap: 17px;
    padding: 0 0 8px 16px;
}

.leg-ride .leg-text {
    padding-bottom: 0;
    font-size: 44px;
    color: #666;
}

.line {
    padding: 0 20px;
    border-radius: 15px;
    background-color: #d81b60;
    color: #fff;
    font-weight: 600;
    line-height: 81px;
}
```
